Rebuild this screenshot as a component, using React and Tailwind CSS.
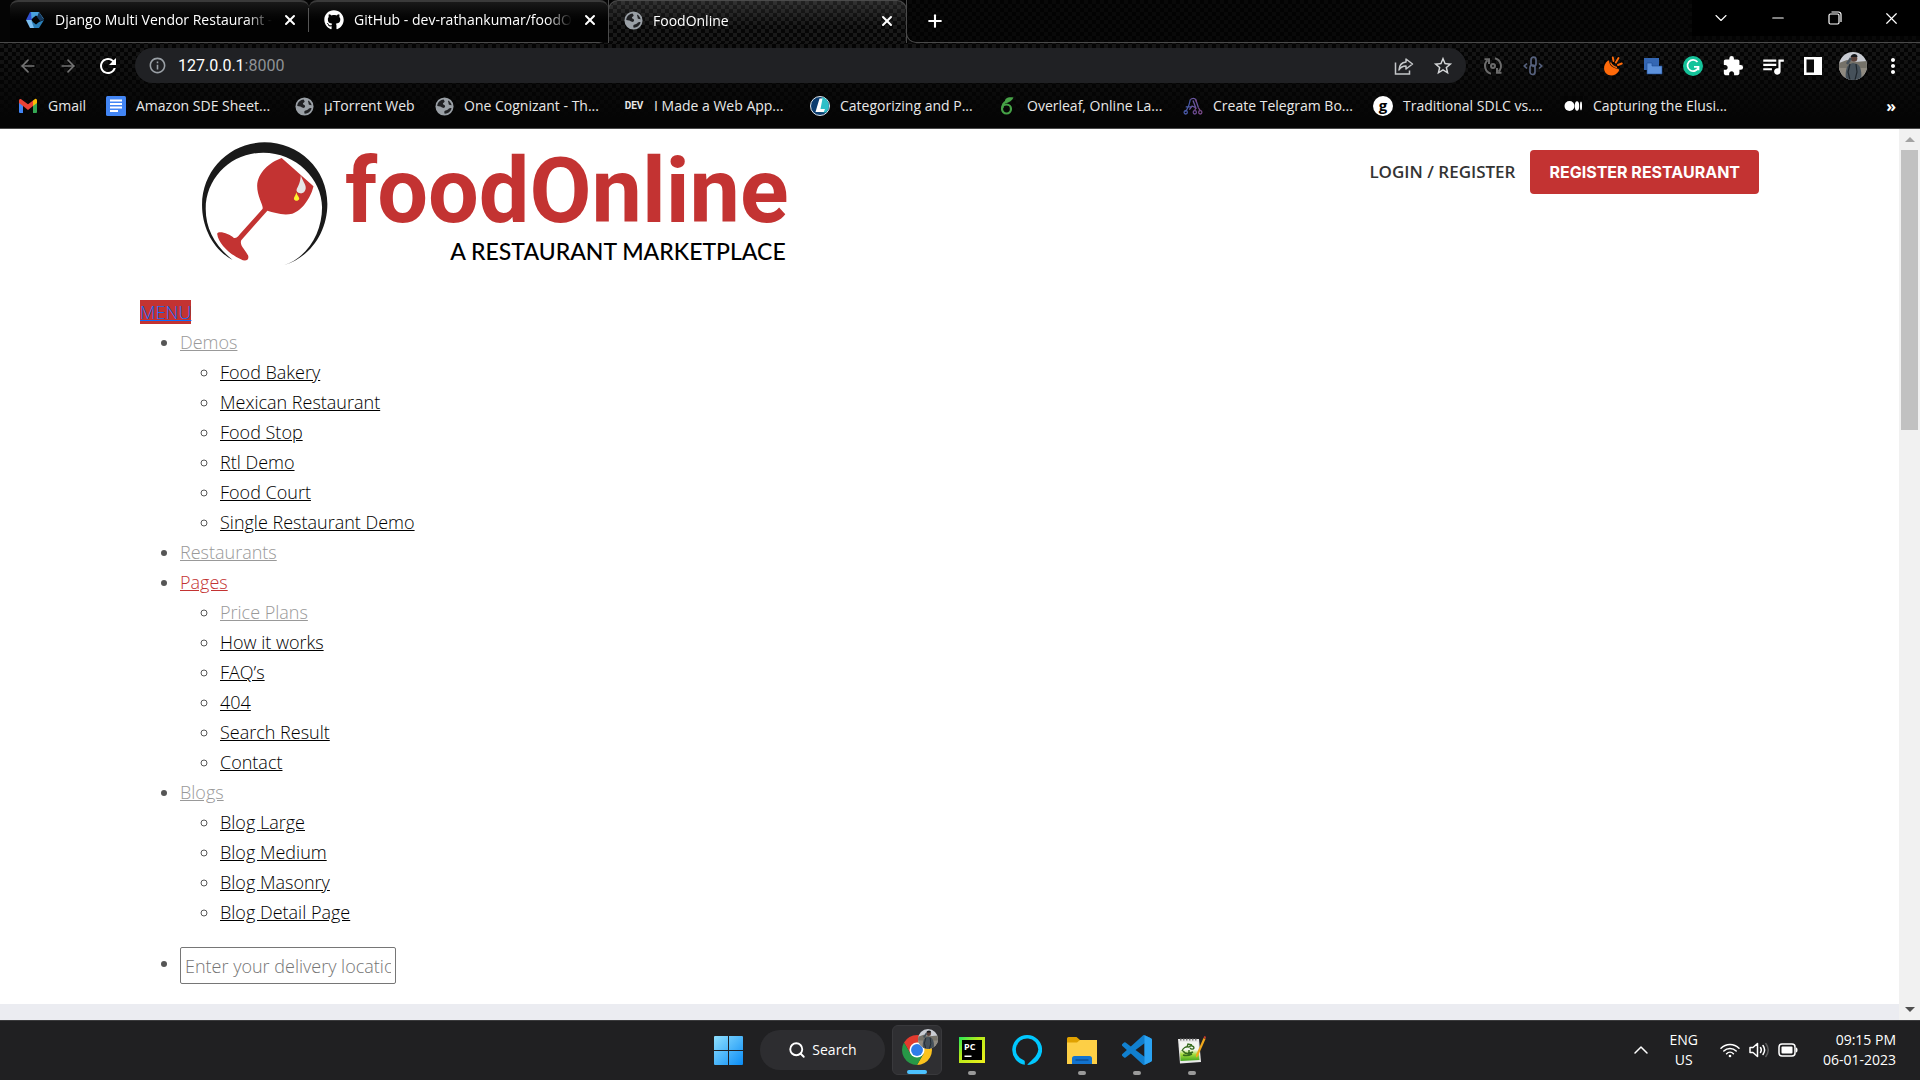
import { ArrowLeft, ArrowRight, ChevronDown, ChevronUp, Copy, Minus, Plus, Search, X } from "lucide-react";
import { FaGithub } from "react-icons/fa";
import {
  MdExtension,
  MdMoreVert,
  MdOutlineInfo,
  MdQueueMusic,
  MdRefresh,
  MdStarOutline,
} from "react-icons/md";

/* ---------- small icons ---------- */

function Globe() {
  return (
    <svg viewBox="0 0 20 20" className="h-[19px] w-[19px]" aria-hidden="true">
      <circle cx="10" cy="10" r="9.5" fill="#9aa0a6" />
      <path d="M9 2.5C5 3 2.4 6 2.4 9.6l3 .4c1.4.3 1.8 1.2 3 1.4 1.500.3 2.300-.6 2.200-1.900C10.400 8 8.500 8.300 8.300 7c-.1-1 1.500-1 1.800-2.100.2-.9-.6-1.500-1.100-2.400z" fill="#202124" />
      <path d="M13.800 3.600c-.3 1.400.6 1.900.5 3-.1 1 .4 1.700 1.500 1.900l1.700.1C17 6.400 15.700 4.600 13.800 3.600zM17.400 11.800c-1.800-.4-2.600.4-3.700 1.300-1 .8-2.200 1-3.200 1.500-1 .6-.9 2-.3 2.900 3.500.1 6.500-2.300 7.200-5.700z" fill="#202124" />
    </svg>
  );
}

function DjangoTabIcon() {
  return (
    <svg viewBox="0 0 20 20" className="h-5 w-5" aria-hidden="true">
      <path d="M1 10 5 2h6L6.500 10z" fill="#2f4fd0" />
      <path d="M1 10h5.500L11 18H5z" fill="#7cc0f2" />
      <path d="M6 2h8l5 7-5-1.500L11 5.500 6.500 9z" fill="#4aa3df" />
      <path d="M6.500 11 11 14.500 14 12l5-2-5 8H9z" fill="#2b7fb8" />
      <path d="M14 2l5 8-4 1-3-4z" fill="#173a5e" />
    </svg>
  );
}

function GmailIcon() {
  return (
    <svg viewBox="0 0 20 16" className="h-4 w-5" aria-hidden="true">
      <path d="M1 3v11a1 1 0 0 0 1 1h3V6z" fill="#4285f4" />
      <path d="M19 3v11a1 1 0 0 1-1 1h-3V6z" fill="#34a853" />
      <path d="M15 2.500 17 1c1-.6 2 .2 2 1.500V5l-4 3z" fill="#fbbc04" />
      <path d="M1 5V2.500C1 1.200 2.200.4 3.200 1.200L10 6.300l5-3.800V8l-5 4-5-4z" fill="#ea4335" />
    </svg>
  );
}

function DocsIcon() {
  return (
    <svg viewBox="0 0 20 20" className="h-5 w-5" aria-hidden="true">
      <rect width="20" height="20" rx="1.500" fill="#4285f4" />
      <path d="M4 4.500h12M4 8h12M4 11.500h12M4 15h8" stroke="#fff" strokeWidth="1.800" />
    </svg>
  );
}

function CategorizingIcon() {
  return (
    <svg viewBox="0 0 20 20" className="h-5 w-5" aria-hidden="true">
      <circle cx="10" cy="10" r="9.500" fill="#0c3c6e" stroke="#dfe7ee" strokeWidth="1" />
      <path d="M12 1a9.200 9.200 0 0 1 4 15.500L9 16z" fill="#2fc0c8" />
      <path d="M9.500 2.500h3L10.500 13h4.500l-1.200 3H5.500z" fill="#fff" />
    </svg>
  );
}

function OverleafIcon() {
  return (
    <svg viewBox="0 0 16 20" className="h-5 w-4" fill="none" stroke="#46a247" aria-hidden="true">
      <circle cx="7.500" cy="13" r="4.500" strokeWidth="2.200" />
      <path d="M3.500 12C3 7 7 5.500 8.500 4.500" strokeWidth="2.200" />
      <path d="M6 4C8 1 11 1.200 14.500 1.500 13.500 4.500 10 6.500 6.500 7.500z" fill="#46a247" stroke="none" />
    </svg>
  );
}

function TelegramBotIcon() {
  return (
    <svg viewBox="0 0 22 20" className="h-5 w-[22px]" fill="none" strokeWidth="1.400" aria-hidden="true">
      <path d="M2.500 16C6 13 7 8 8 3M3 11h6" stroke="#4a5aa8" />
      <circle cx="3" cy="17" r="1.800" stroke="#4a5aa8" />
      <path d="M8 3c2-2 5-2 6 0l3 9M11 4l3 8-4-2-3 4" stroke="#6a56a0" />
      <circle cx="13" cy="17" r="1.800" stroke="#6a4a90" />
      <circle cx="19" cy="17" r="1.800" stroke="#7a4a8a" />
      <path d="M14 12l-1 3M17 12l2 3M14 3l1 3" stroke="#7a4a8a" />
    </svg>
  );
}

function MediumIcon() {
  return (
    <svg viewBox="0 0 20 20" className="h-5 w-5" fill="#fff" aria-hidden="true">
      <rect width="20" height="20" fill="#050505" />
      <circle cx="6.500" cy="10" r="5" />
      <ellipse cx="14" cy="10" rx="2.200" ry="4.700" />
      <ellipse cx="18" cy="10" rx="1" ry="4.400" />
    </svg>
  );
}

function ShareIcon() {
  return (
    <svg viewBox="0 0 20 20" className="h-5 w-5" fill="none" stroke="#c4c7c9" strokeWidth="1.500" aria-hidden="true">
      <path d="M1.500 6.500v11.500h14v-3.500" />
      <path d="M12 3l6.500 5L12 13v-3C8.500 10 6.500 11.200 5 14c.2-4.500 2.500-7.500 7-8z" strokeLinejoin="round" />
    </svg>
  );
}

function SyncIcon() {
  return (
    <svg viewBox="0 0 20 20" className="h-5 w-5" fill="none" stroke="#6b6b6b" strokeWidth="2" aria-hidden="true">
      <path d="M8 17.700A8 8 0 0 1 4.500 4.200M12 2.300A8 8 0 0 1 15.500 15.800" />
      <path d="M1.500 3.200H6V8M18.500 16.800H14V12" />
      <circle cx="10" cy="10" r="2" />
    </svg>
  );
}

function LinkCodeIcon() {
  return (
    <svg viewBox="0 0 20 20" className="h-5 w-5" fill="none" stroke="#56617d" strokeWidth="1.700" aria-hidden="true">
      <rect x="8" y="1.200" width="5" height="9" rx="2.500" />
      <rect x="7" y="9" width="5" height="9.500" rx="2.500" />
      <path d="M4 7.500 1.300 10 4 12.500M16 7.500 18.700 10 16 12.500" />
    </svg>
  );
}

function OrangeIcon() {
  return (
    <svg viewBox="0 0 20 20" className="h-5 w-5" aria-hidden="true">
      <path d="M4.500 5C.5 8.500 0 14 3 17.200c3.500 3.500 9.500 2.800 12.500-1.700.9-1.300.6-2.500-.5-2.700C10 12.500 6.500 9.500 6.200 5.600 6.100 4.500 5.300 4.300 4.500 5z" fill="#ff6a0a" />
      <path d="M7.500 6.500c1 2.500 3.500 4.500 6.500 5" stroke="#ff6a0a" strokeWidth="1.300" fill="none" />
      <path d="M10.500 5 9.800 1.500M12.800 6.500l2.700-4.500M15 9l3.800-1.500" stroke="#ff6a0a" strokeWidth="1.900" strokeLinecap="round" />
    </svg>
  );
}

function BlueSquaresIcon() {
  return (
    <svg viewBox="0 0 20 18" className="h-[18px] w-5" aria-hidden="true">
      <rect x="1" y="1" width="15" height="12" fill="#3467b4" />
      <path d="M4 6h5v3h10v8H4z" fill="#5d92dc" stroke="#1c4a94" strokeWidth=".6" />
    </svg>
  );
}

function GrammarlyIcon() {
  return (
    <svg viewBox="0 0 20 20" className="h-5 w-5" fill="none" stroke="#fff" aria-hidden="true">
      <circle cx="10" cy="10" r="10" fill="#15c39a" stroke="none" />
      <path d="M14.500 6A5.600 5.600 0 1 0 15.500 11" strokeWidth="1.700" />
      <path d="M11 10.800h4.500v3.400" strokeWidth="1.700" />
    </svg>
  );
}

function SidePanelIcon() {
  return (
    <svg viewBox="0 0 18 18" className="h-[18px] w-[18px]" aria-hidden="true">
      <rect width="18" height="18" fill="#fff" />
      <rect x="2.500" y="2.500" width="7.500" height="13" fill="#0a0a0a" />
    </svg>
  );
}

function Avatar({ size }) {
  return (
    <svg viewBox="0 0 28 28" className={`rounded-full ${size}`} aria-hidden="true">
      <rect width="28" height="28" fill="#c9ccd3" />
      <path d="M0 11l8-3 8 2 12-1v8H0z" fill="#757269" />
      <path d="M0 16h28v12H0z" fill="#8f8a80" />
      <path d="M7 28c-1-7 0-14 4-16l3-1 4 1c4 2 5 9 4 16z" fill="#46515a" />
      <path d="M11 12 9 20l2 8M17 12l1 8-2 8" stroke="#1e262c" strokeWidth="1.200" fill="none" />
      <circle cx="15" cy="6.500" r="3.300" fill="#5a4038" />
      <path d="M11.500 5c1-4 7-4 7 0z" fill="#15181c" />
      <path d="M8 12l4-6" stroke="#46515a" strokeWidth="2.500" />
    </svg>
  );
}

/* ---------- browser chrome ---------- */

const tabs = [
  { title: "Django Multi Vendor Restaurant -", icon: <DjangoTabIcon /> },
  { title: "GitHub - dev-rathankumar/foodO", icon: <FaGithub className="h-5 w-5 text-white" /> },
];

function TabBody({ title, icon }) {
  return (
    <>
      <span className="flex w-5 shrink-0 justify-center">{icon}</span>
      <span className="min-w-0 flex-1 overflow-hidden whitespace-nowrap [mask-image:linear-gradient(90deg,#000_88%,transparent)]">
        {title}
      </span>
      <button aria-label={`Close ${title}`} className="shrink-0">
        <X className="h-4 w-4" strokeWidth={3} />
      </button>
    </>
  );
}

function TabStrip() {
  return (
    <div className="flex h-[43px] bg-[repeating-conic-gradient(#090909_0_25%,#030303_0_50%)] bg-[length:8px_8px] text-sm text-white">
      <div className="-mr-px flex w-[609px] shrink-0 items-center rounded-br-[10px] border-r border-b border-[#4a4a4a] bg-[#050505] pl-[10px]">
        {tabs.map((tab, i) => (
          <div
            key={tab.title}
            className="flex h-full min-w-0 flex-1 items-center rounded-t-lg border-t-2 border-[#3a3a3a] bg-linear-to-b from-[#191919] to-[#020202] to-50% pb-1"
          >
            <div
              className={
                i === 0
                  ? "flex w-full min-w-0 items-center gap-[10px] border-r border-[#555] py-[2px] pr-[10px] pl-[15px]"
                  : "flex w-full min-w-0 items-center gap-[10px] py-[2px] pr-[10px] pl-[15px]"
              }
            >
              <TabBody {...tab} />
            </div>
          </div>
        ))}
      </div>
      <div className="flex w-[299px] shrink-0 items-center gap-[10px] rounded-t-[10px] border-x border-t border-[#4a4a4a] bg-[linear-gradient(#ffffff1c,transparent_60%),repeating-conic-gradient(#191919_0_25%,#060606_0_50%)] bg-[length:100%_100%,8px_8px] pr-[11px] pb-[3px] pl-[14px]">
        <TabBody title="FoodOnline" icon={<Globe />} />
      </div>
      <div className="-ml-px flex flex-1 items-center rounded-bl-[10px] border-b border-l border-[#4a4a4a] pl-[18px]">
        <button aria-label="New tab">
          <Plus className="h-5 w-5" strokeWidth={2.5} />
        </button>
        <div className="ml-auto flex h-9 self-start bg-black">
          <button aria-label="Search tabs" className="flex w-[57px] items-center justify-center">
            <ChevronDown className="h-5 w-5" strokeWidth={1.3} />
          </button>
          <button aria-label="Minimize" className="flex w-[57px] items-center justify-center">
            <Minus className="h-[18px] w-[18px]" strokeWidth={1.5} />
          </button>
          <button aria-label="Restore" className="flex w-[57px] items-center justify-center">
            <svg viewBox="0 0 14 14" className="h-[14px] w-[14px]" fill="none" stroke="#fff" strokeWidth="1.200" aria-hidden="true">
              <rect x="1" y="3" width="10" height="10" rx="1.500" />
              <path d="M3.500 1H10.500A2.500 2.500 0 0 1 13 3.500V11" />
            </svg>
          </button>
          <button aria-label="Close window" className="flex w-[57px] items-center justify-center">
            <X className="h-[19px] w-[19px]" strokeWidth={1.5} />
          </button>
        </div>
      </div>
    </div>
  );
}

const extensions = [
  { label: "Sync", icon: <SyncIcon /> },
  { label: "Link tool", icon: <LinkCodeIcon /> },
  { label: "Separator", icon: null },
  { label: "Orange extension", icon: <OrangeIcon /> },
  { label: "Windows extension", icon: <BlueSquaresIcon /> },
  { label: "Grammarly", icon: <GrammarlyIcon /> },
  { label: "Extensions", icon: <MdExtension className="h-[22px] w-[22px]" /> },
  { label: "Media", icon: <MdQueueMusic className="h-[26px] w-[26px]" /> },
  { label: "Side panel", icon: <SidePanelIcon /> },
  { label: "Profile", icon: <Avatar size="h-7 w-7" /> },
  { label: "Menu", icon: <MdMoreVert className="h-6 w-6" /> },
];

function Toolbar() {
  return (
    <div className="flex h-[45px] items-center pr-[7px] pl-2 text-white">
      <button aria-label="Back" className="flex w-10 justify-center text-[#747474]">
        <ArrowLeft className="h-5 w-5" strokeWidth={2} />
      </button>
      <button aria-label="Forward" className="flex w-10 justify-center text-[#747474]">
        <ArrowRight className="h-5 w-5" strokeWidth={2} />
      </button>
      <button aria-label="Reload" className="flex w-10 justify-center">
        <MdRefresh className="h-6 w-6" />
      </button>
      <div className="mr-[7px] ml-[7px] flex h-[35px] flex-1 items-center rounded-full bg-[#202124] pr-3 pl-[13px]">
        <MdOutlineInfo className="h-[19px] w-[19px] text-[#9aa0a6]" />
        <div className="ml-[11px] flex-1 font-[Roboto,'Open_Sans',sans-serif] text-base">
          127.0.0.1<span className="text-[#8f9296]">:8000</span>
        </div>
        <button aria-label="Share" className="mr-[18px]">
          <ShareIcon />
        </button>
        <button aria-label="Bookmark this page">
          <MdStarOutline className="h-[22px] w-[22px] text-[#d5d7d9]" />
        </button>
      </div>
      {extensions.map(({ label, icon }) =>
        icon ? (
          <button key={label} aria-label={label} className="flex w-10 justify-center">
            {icon}
          </button>
        ) : (
          <span key={label} className="w-10" />
        )
      )}
    </div>
  );
}

const bookmarks = [
  { title: "Gmail", icon: <GmailIcon />, width: "w-[88px]" },
  { title: "Amazon SDE Sheet...", icon: <DocsIcon />, width: "w-[188px]" },
  { title: "µTorrent Web", icon: <Globe />, width: "w-[140px]" },
  { title: "One Cognizant - Th...", icon: <Globe />, width: "w-[190px]" },
  {
    title: "I Made a Web App...",
    icon: <span className="font-[Roboto,sans-serif] text-[10px] font-bold">DEV</span>,
    width: "w-[186px]",
  },
  { title: "Categorizing and P...", icon: <CategorizingIcon />, width: "w-[187px]" },
  { title: "Overleaf, Online La...", icon: <OverleafIcon />, width: "w-[186px]" },
  { title: "Create Telegram Bo...", icon: <TelegramBotIcon />, width: "w-[190px]" },
  {
    title: "Traditional SDLC vs....",
    icon: (
      <span className="flex h-5 w-5 items-center justify-center rounded-full bg-white pb-[2px] text-[15px] leading-none font-bold text-black">
        g
      </span>
    ),
    width: "w-[190px]",
  },
  { title: "Capturing the Elusi...", icon: <MediumIcon />, width: "w-[190px]" },
];

function Bookmarks() {
  return (
    <nav aria-label="Bookmarks" className="flex h-10 items-center pb-1 pl-[18px] text-sm text-[#e8e8e8]">
      {bookmarks.map(({ title, icon, width }) => (
        <a key={title} href="#bookmark" className={`flex shrink-0 items-center gap-[10px] whitespace-nowrap ${width}`}>
          <span className="flex w-5 shrink-0 justify-center">{icon}</span>
          {title}
        </a>
      ))}
      <button aria-label="More bookmarks" className="mr-6 ml-auto text-base leading-none font-bold text-white">
        »
      </button>
    </nav>
  );
}

/* ---------- web page ---------- */

function Logo() {
  return (
    <a href="#home" className="flex gap-4 pl-[60px]">
      <svg viewBox="50 36 316 378" preserveAspectRatio="none" className="h-[126px] w-[129px]" aria-hidden="true">
        <path d="M255 409C320 385 362 310 362 225C362 120 292 40 208 40C124 40 55 122 55 228C55 295 82 362 130 393C88 352 64 300 64 240C64 145 128 71 205 71C285 71 349 150 349 235C349 310 315 385 255 409Z" fill="#1a1a1a" />
        <path d="M250 87L328 172C322 205 300 246 276 254C252 261 232 250 215 245L151 334C146 350 162 362 168 380C171 395 160 398 150 391C124 376 95 345 92 314C96 304 122 314 133 327C140 328 144 322 148 315L203 240C207 230 190 205 190 170C192 130 220 100 250 87Z" fill="#c33332" />
        <path d="M297 138C300 155 310 165 309 178C308 190 300 194 296 193C288 192 285 186 287 180C291 170 296 160 297 138Z" fill="#e6e6e6" />
        <path d="M286 190C288 200 294 205 293 210C291 217 282 217 280 210C280 203 285 200 286 190Z" fill="#fff22d" />
      </svg>
      <span className="flex flex-col pt-[6px]">
        <span className="font-[Roboto,sans-serif] text-[90px] leading-none font-bold text-[#c33332]">foodOnline</span>
        <span className="mt-[3px] self-end pr-[3px] font-[Lato,sans-serif] text-[23px] leading-none font-medium text-black">
          A RESTAURANT MARKETPLACE
        </span>
      </span>
    </a>
  );
}

const menu = [
  {
    label: "Demos",
    color: "text-[#999]",
    items: ["Food Bakery", "Mexican Restaurant", "Food Stop", "Rtl Demo", "Food Court", "Single Restaurant Demo"],
  },
  { label: "Restaurants", color: "text-[#999]", items: [] },
  {
    label: "Pages",
    color: "text-[#c33332]",
    items: ["Price Plans", "How it works", "FAQ’s", "404", "Search Result", "Contact"],
  },
  { label: "Blogs", color: "text-[#999]", items: ["Blog Large", "Blog Medium", "Blog Masonry", "Blog Detail Page"] },
];

function Page() {
  return (
    <div className="flex-1 overflow-hidden bg-white font-['Open_Sans',sans-serif]">
      <header className="flex h-[168px] items-start justify-between px-[140px] pt-3">
        <Logo />
        <div className="flex items-center gap-[15px] pt-[9px]">
          <a href="#login" className="text-[17px] font-semibold text-[#333]">
            LOGIN / REGISTER
          </a>
          <a
            href="#register"
            className="flex h-11 items-center rounded bg-[#c33332] px-[19px] font-[Inter,sans-serif] text-base font-bold text-white"
          >
            REGISTER RESTAURANT
          </a>
        </div>
      </header>
      <main className="px-[140px] text-lg leading-[30px] font-[350] text-[#555]">
        <a href="#menu" className="bg-[#c33332] text-[#0d6efd] underline">
          MENU
        </a>
        <ul className="list-disc pl-10">
          {menu.map(({ label, color, items }) => (
            <li key={label}>
              <a href="#section" className={`underline ${color}`}>
                {label}
              </a>
              {items.length > 0 && (
                <ul className="list-[circle] pl-10">
                  {items.map((item) => (
                    <li key={item}>
                      <a href="#item" className={item === "Price Plans" ? "text-[#999] underline" : "text-black underline"}>
                        {item}
                      </a>
                    </li>
                  ))}
                </ul>
              )}
            </li>
          ))}
          <li className="mt-5 mb-5">
            <input
              type="text"
              aria-label="Delivery location"
              placeholder="Enter your delivery location"
              className="h-[37px] w-[216px] rounded-[2px] border border-[#767676] bg-white px-1 align-middle placeholder:text-[#757575]"
            />
          </li>
        </ul>
      </main>
      <div className="h-40 bg-[#ebecf1]" />
    </div>
  );
}

function ScrollBar() {
  return (
    <div className="flex w-[21px] shrink-0 flex-col items-center bg-[#f1f1f1]">
      <button aria-label="Scroll up" className="flex h-[21px] items-center justify-center">
        <span className="border-x-[5px] border-b-[5px] border-x-transparent border-b-[#a3a3a3]" />
      </button>
      <div className="h-[280px] w-[17px] bg-[#c1c1c1]" />
      <button aria-label="Scroll down" className="mt-auto flex h-[21px] items-center justify-center">
        <span className="border-x-[5px] border-t-[5px] border-x-transparent border-t-[#505050]" />
      </button>
    </div>
  );
}

/* ---------- taskbar ---------- */

function WindowsIcon() {
  return (
    <svg viewBox="0 0 29 29" className="h-[29px] w-[29px]" aria-hidden="true">
      <linearGradient id="win" x1="0" y1="0" x2="1" y2="1">
        <stop offset="0" stopColor="#8fe0ff" />
        <stop offset="1" stopColor="#0a8cf5" />
      </linearGradient>
      <path d="M0 1a1 1 0 0 1 1-1h13v14H0zM15 0h13a1 1 0 0 1 1 1v13H15zM0 15h14v14H1a1 1 0 0 1-1-1zM15 15h14v13a1 1 0 0 1-1 1H15z" fill="url(#win)" />
    </svg>
  );
}

function ChromeIcon() {
  return (
    <span className="relative">
      <svg viewBox="-22 -22 44 44" className="h-[30px] w-[30px]" aria-hidden="true">
        <path d="M-19.050-11A22 22 0 0 1 19.050-11L0-11L-9.530 5.500Z" fill="#e33b2e" />
        <path d="M19.050-11A22 22 0 0 1 0 22L9.530 5.500L0-11Z" fill="#fcc31e" />
        <path d="M0 22A22 22 0 0 1-19.050-11L-9.530 5.500L9.530 5.500Z" fill="#279847" />
        <circle r="11" fill="#fff" />
        <circle r="8.700" fill="#2f7de9" />
      </svg>
      <span className="absolute -top-[6px] -right-[6px]">
        <Avatar size="h-5 w-5" />
      </span>
    </span>
  );
}

function PyCharmIcon() {
  return (
    <svg viewBox="0 0 26 26" className="h-[26px] w-[26px]" aria-hidden="true">
      <linearGradient id="pc" x1="0" y1="0" x2="1" y2="1">
        <stop offset="0" stopColor="#21e85c" />
        <stop offset=".4" stopColor="#b5ea1a" />
        <stop offset="1" stopColor="#f0f01c" />
      </linearGradient>
      <rect width="26" height="26" fill="url(#pc)" />
      <rect x="3" y="3" width="20" height="20" fill="#000" />
      <text x="5" y="13" fontSize="9" fontWeight="700" fontFamily="Open Sans, sans-serif" fill="#fff">
        PC
      </text>
      <rect x="5.500" y="18.500" width="7" height="1.500" fill="#fff" />
    </svg>
  );
}

function AlexaIcon() {
  return (
    <svg viewBox="0 0 30 30" className="h-[30px] w-[30px]" aria-hidden="true">
      <path d="M15 0a15 15 0 0 0-2.200 29.800v-3c0-.7-.4-1.200-1-1.500A11.200 11.200 0 1 1 26.300 14.500C25.500 22 18 26 15.200 30A15 15 0 0 0 15 0z" fill="#00c8ff" />
    </svg>
  );
}

function FolderIcon() {
  return (
    <svg viewBox="0 0 30 27" className="h-[27px] w-[30px]" aria-hidden="true">
      <path d="M0 1.500A1.500 1.500 0 0 1 1.500 0h8L13 3h15.500A1.500 1.500 0 0 1 30 4.500V10H0z" fill="#e0a100" />
      <path d="M0 5.500h10L13 3h17v24H0z" fill="#fdcf46" />
      <path d="M5 27v-5.500A2.500 2.500 0 0 1 7.500 19h15a2.500 2.500 0 0 1 2.500 2.500V27z" fill="#1273cf" />
      <path d="M8.500 23h13" stroke="#0c4f96" strokeWidth="1.500" />
    </svg>
  );
}

function VsCodeIcon() {
  return (
    <svg viewBox="0 0 24 24" className="h-[30px] w-[30px]" aria-hidden="true">
      <path
        d="M23.150 2.587L18.210.210a1.494 1.494 0 0 0-1.705.290l-9.460 8.630-4.120-3.128a.999.999 0 0 0-1.276.057L.327 7.261A1 1 0 0 0 .326 8.740L3.899 12 .326 15.260a1 1 0 0 0 .001 1.479L1.650 17.940a.999.999 0 0 0 1.276.057l4.120-3.128 9.460 8.630a1.492 1.492 0 0 0 1.704.290l4.942-2.377A1.500 1.500 0 0 0 24 20.060V3.939a1.500 1.500 0 0 0-.850-1.352zm-5.146 14.861L10.826 12l7.178-5.448v10.896z"
        fill="#1180cf"
      />
      <path d="M18 .150 23.150 2.587A1.500 1.500 0 0 1 24 3.939V20.060a1.500 1.500 0 0 1-.850 1.352L18 23.850z" fill="#2aa3f3" />
    </svg>
  );
}

function NotepadIcon() {
  return (
    <svg viewBox="0 0 28 28" className="h-7 w-7" aria-hidden="true">
      <linearGradient id="npp" x1="0" y1="0" x2="0" y2="1">
        <stop offset=".4" stopColor="#f4f6f2" />
        <stop offset=".65" stopColor="#a6dd3e" />
        <stop offset="1" stopColor="#3fa51d" />
      </linearGradient>
      <path d="M0 3h21l2 23-21 1.500z" fill="#e9e9e9" />
      <path d="M1.500 6h18.500l1.500 18-19 1z" fill="url(#npp)" />
      <path d="M2 3.500h18" stroke="#777" strokeWidth="2" strokeDasharray="1.500 1.500" />
      <path d="M4 15c1-3 4-5 7-4 2-2 5-1 5 1-1 2-3 1-4 0M5 15c2 3 6 3 10 1M9 11l1-3 4 1M11 14v3M5 19c3 1 7 0 9-1" stroke="#356b1d" strokeWidth="1.400" fill="none" />
      <path d="M18 19 25.500 2l2 1L20 20l-2 1.500z" fill="#f0a81c" />
      <path d="M25.500 2l.8-2 1.700.8-.5 2.200z" fill="#c23a2b" />
    </svg>
  );
}

const apps = [
  { label: "PyCharm", icon: <PyCharmIcon />, running: true },
  { label: "Alexa", icon: <AlexaIcon />, running: false },
  { label: "File Explorer", icon: <FolderIcon />, running: true },
  { label: "Visual Studio Code", icon: <VsCodeIcon />, running: true },
  { label: "Notepad++", icon: <NotepadIcon />, running: true },
];

function Taskbar() {
  return (
    <footer className="grid h-[60px] shrink-0 grid-cols-[1fr_auto_1fr] items-center border-t border-[#3a3a3c] bg-[#202022] pb-px text-sm text-white">
      <span />
      <div className="flex items-center gap-[5px]">
        <button aria-label="Start" className="flex h-[50px] w-[50px] items-center justify-center">
          <WindowsIcon />
        </button>
        <button className="mr-[2px] ml-[2px] flex h-10 w-[125px] items-center justify-center gap-[6px] rounded-full bg-[#2d2d30]">
          <Search className="h-[18px] w-[18px]" strokeWidth={2.5} />
          Search
        </button>
        <button
          aria-label="Google Chrome"
          className="relative flex h-[50px] w-[50px] items-center justify-center rounded-md border border-[#39393c] bg-[#2f2f32]"
        >
          <ChromeIcon />
          <span className="absolute bottom-0 left-1/2 h-1 w-5 -translate-x-1/2 rounded-full bg-[#4cc2ff]" />
        </button>
        {apps.map(({ label, icon, running }) => (
          <button key={label} aria-label={label} className="relative flex h-[50px] w-[50px] items-center justify-center">
            {icon}
            {running && <span className="absolute bottom-0 left-1/2 h-1 w-2 -translate-x-1/2 rounded-full bg-[#9a9a9a]" />}
          </button>
        ))}
      </div>
      <div className="flex items-center justify-end pr-6">
        <button aria-label="Show hidden icons">
          <ChevronUp className="h-6 w-6" strokeWidth={1.5} />
        </button>
        <button className="ml-4 text-center leading-5">
          ENG
          <br />
          US
        </button>
        <button aria-label="Network, sound and battery" className="ml-[22px] flex items-center gap-[9px]">
          <svg viewBox="0 0 20 16" className="h-4 w-5" fill="none" stroke="#fff" strokeWidth="1.500" strokeLinecap="round">
            <path d="M1 6.200a12.700 12.700 0 0 1 18 0M3.800 9a8.800 8.800 0 0 1 12.400 0M6.600 11.700a4.900 4.900 0 0 1 6.800 0" />
            <circle cx="10" cy="14" r="1.300" fill="#fff" stroke="none" />
          </svg>
          <svg viewBox="0 0 20 16" className="h-4 w-5" fill="none" stroke="#fff" strokeWidth="1.500" strokeLinecap="round">
            <path d="M1 5.500h3L8.500 1.500v13L4 10.500H1z" strokeLinejoin="round" />
            <path d="M11.500 5.500c1 1.500 1 3.500 0 5M14 3.500c2 2.800 2 6.200 0 9" />
            <path d="M16.800 1.500c3 4 3 9 0 13" stroke="#5c5c5c" />
          </svg>
          <svg viewBox="0 0 21 14" className="h-[14px] w-[21px]">
            <rect x="1" y="1" width="16" height="12" rx="3" fill="none" stroke="#fff" strokeWidth="1.500" />
            <rect x="3.500" y="3.500" width="11" height="7" rx="1" fill="#fff" />
            <path d="M18 4.500c2 0 2 5 0 5z" fill="#fff" />
          </svg>
        </button>
        <button className="ml-6 text-right leading-5">
          09:15 PM
          <br />
          06-01-2023
        </button>
      </div>
    </footer>
  );
}

export default function App() {
  return (
    <div className="flex h-screen flex-col overflow-hidden font-['Open_Sans',sans-serif]">
      <div className="shrink-0 border-b border-[#4a4a4a] bg-[linear-gradient(transparent_30%,#050505_92%),repeating-conic-gradient(#181818_0_25%,#040404_0_50%)] bg-[length:100%_100%,8px_8px]">
        <TabStrip />
        <Toolbar />
        <Bookmarks />
      </div>
      <div className="flex min-h-0 flex-1">
        <Page />
        <ScrollBar />
      </div>
      <Taskbar />
    </div>
  );
}
